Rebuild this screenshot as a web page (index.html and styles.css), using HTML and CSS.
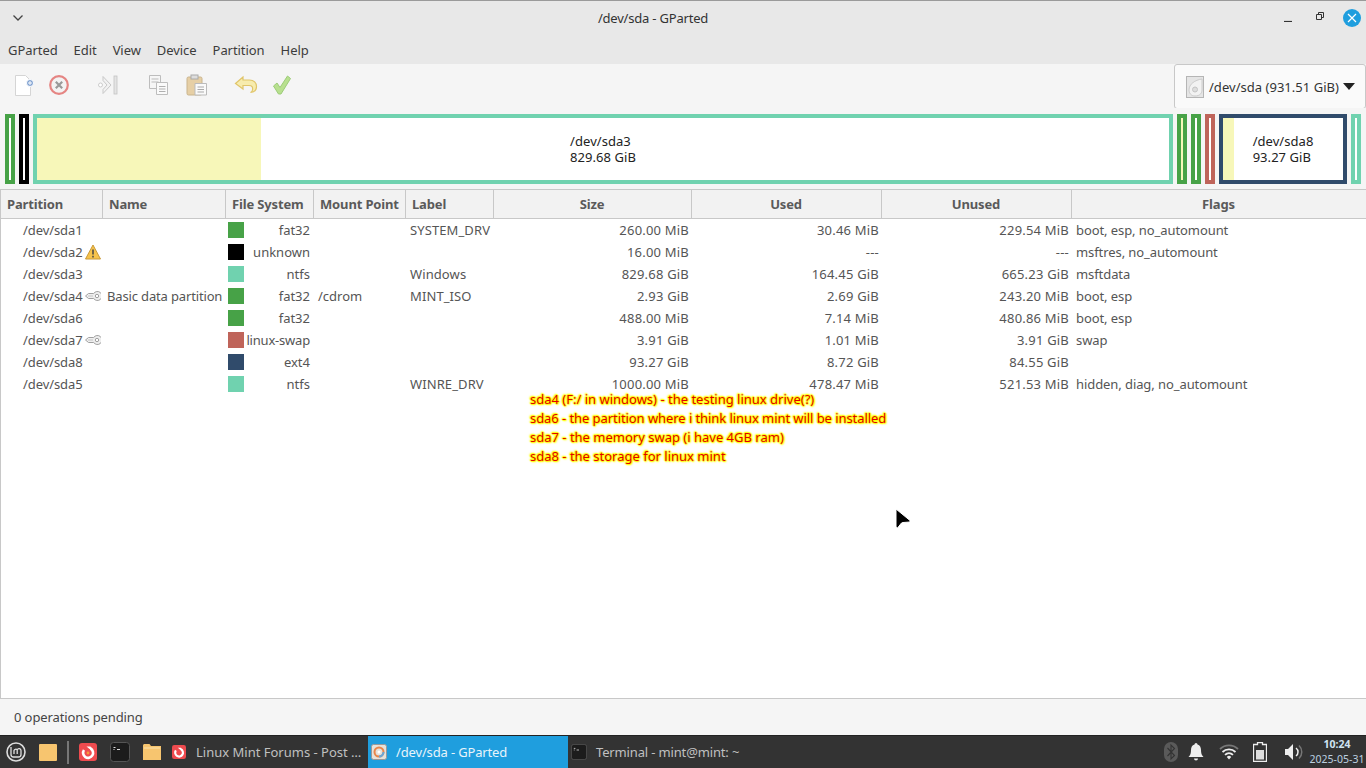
FILE: index.html
```html
<!DOCTYPE html>
<html lang="en">
<head>
<meta charset="utf-8">
<title>/dev/sda - GParted</title>
<link rel="stylesheet" href="styles.css">
</head>
<body>
<div class="window">
  <header class="titlebar">
    <svg class="win-menu" width="12" height="8" viewBox="0 0 12 8"><path d="M1.500 1.500 6 6l4.500-4.500" fill="none" stroke="#444" stroke-width="1.300"/></svg>
    <div class="title">/dev/sda - GParted</div>
    <div class="win-buttons">
      <svg class="b-min" width="8" height="8" viewBox="0 0 8 8"><path d="M0 7.500h8" stroke="#333" stroke-width="1.200"/></svg>
      <svg class="b-max" width="8" height="8" viewBox="0 0 8 8"><path d="M.5 2.500h5v5h-5zM2.500 2V.5h5v5H6" fill="none" stroke="#333" stroke-width="1"/></svg>
      <svg class="b-close" width="18" height="18" viewBox="0 0 18 18"><circle cx="9" cy="9" r="9" fill="#1f9ede"/><path d="M5 5l8 8M13 5l-8 8" stroke="#fff" stroke-width="1.200"/></svg>
    </div>
  </header>
  <nav class="menubar">
    <span>GParted</span><span>Edit</span><span>View</span><span>Device</span><span>Partition</span><span>Help</span>
  </nav>
  <div class="toolbar">
    <div class="tools">
      <svg class="t1" width="22" height="24" viewBox="0 0 22 24"><path d="M2.500 2.500h10l5 5v15h-15z" fill="#fff" stroke="#d5d5d5"/><circle cx="17" cy="10" r="3.500" fill="#7d9fd0" stroke="#fff"/><path d="M15 10h4M17 8v4" stroke="#fff"/></svg>
      <svg class="t2" width="22" height="22" viewBox="0 0 22 22"><circle cx="11" cy="11" r="8.800" fill="#f3f3f3" stroke="#e58583" stroke-width="2.200"/><path d="M7.800 7.800l6.400 6.400M14.200 7.800l-6.400 6.400" stroke="#999" stroke-width="2.200"/></svg>
      <svg class="t3" width="22" height="22" viewBox="0 0 22 22"><circle cx="3.500" cy="11" r="2" fill="#fff" stroke="#ccc"/><path d="M6 2.500 14 11l-8 8.500v-4l4-4.500-4-4.500z" fill="#f2f2f2" stroke="#c8c8c8"/><rect x="17" y="2" width="3" height="18" fill="#e4e4e4" stroke="#c4c4c4" stroke-width=".8"/></svg>
      <svg class="t4" width="22" height="22" viewBox="0 0 22 22"><path d="M1.500 1.500h11v13h-11z" fill="#f6f6f6" stroke="#bdbdbd"/><path d="M3.500 5h7M3.500 8h7" stroke="#bbb"/><path d="M8.500 8.500h11v12h-11z" fill="#fafafa" stroke="#bdbdbd"/><path d="M11 12.500h6.500M11 15h6.500M11 17.500h6.500" stroke="#b0b0b0"/></svg>
      <svg class="t5" width="22" height="22" viewBox="0 0 22 22"><rect x="1" y="3" width="15" height="18" rx="1.500" fill="#e6cfa5" stroke="#c9b48d"/><rect x="5" y="1" width="7" height="4" fill="#ddd" stroke="#aaa"/><path d="M9 9.500h11.500v11.500H9z" fill="#fafafa" stroke="#bbb"/><path d="M11.500 13h6.500M11.500 15.500h6.500M11.500 18h6.500" stroke="#aaa"/></svg>
      <svg class="t6" width="24" height="20" viewBox="0 0 24 20"><path d="M9 2 1.500 8.500 9 14v-3.500h6c3 0 4 1.500 3.500 4.500-.2 1.300-1 2-2 2.500 3.500-.3 6-2.500 6-6s-2.500-6.500-7-6.500H9z" fill="#f7ecae" stroke="#e0c56a" stroke-width="1.200"/></svg>
      <svg class="t7" width="20" height="20" viewBox="0 0 20 20"><path d="M1.500 11 5 8l3 4.500L15.500 1l3 2.500-9.500 15.500h-2.500z" fill="#b8e08f" stroke="#9ccc78"/></svg>
    </div>
    <div class="device-combo">
      <svg width="18" height="22" viewBox="0 0 18 22"><rect x=".5" y=".5" width="17" height="21" fill="#e5e5e5" stroke="#b5b5b5"/><path d="M16 3C9 4 3 8 3 14c0 3 2 6 6 6 5 0 7-3 7-6z" fill="#f2f2f2" stroke="#ccc"/><circle cx="9" cy="13.500" r="2.500" fill="#ddd" stroke="#c4c4c4"/></svg>
      <span>/dev/sda (931.51 GiB)</span>
      <i class="caret"></i>
    </div>
  </div>
  <section class="diskmap">
    <div class="seg fat w10"></div>
    <div class="seg black w10"></div>
    <div class="seg ntfs big">
      <b class="fill sda3fill"></b>
      <div class="seg-label">/dev/sda3<br>829.68 GiB</div>
    </div>
    <div class="seg fat w10"><b class="fill tiny2"></b></div>
    <div class="seg fat w10"></div>
    <div class="seg swap w10"></div>
    <div class="seg ext w128">
      <b class="fill sda8fill"></b>
      <div class="seg-label">/dev/sda8<br>93.27 GiB</div>
    </div>
    <div class="seg ntfs w10"></div>
  </section>
  <main class="list">
    <div class="row head">
      <div>Partition</div><div>Name</div><div>File System</div><div>Mount Point</div><div>Label</div>
      <div class="c">Size</div><div class="c">Used</div><div class="c">Unused</div><div class="c">Flags</div>
    </div>
    <div class="row"><div class="pt">/dev/sda1</div><div></div><div class="fs"><i class="sw g"></i>fat32</div><div></div><div class="lb">SYSTEM_DRV</div><div class="r">260.00 MiB</div><div class="r">30.46 MiB</div><div class="r">229.54 MiB</div><div class="fl">boot, esp, no_automount</div></div>
    <div class="row"><div class="pt">/dev/sda2<svg class="ic" width="16" height="16" viewBox="0 0 16 16"><path d="M8 1 15.500 15H.5z" fill="#f6c34c" stroke="#c99a3a"/><path d="M8 5.500v5M8 11.800v1.700" stroke="#444" stroke-width="1.500"/></svg></div><div></div><div class="fs"><i class="sw k"></i>unknown</div><div></div><div></div><div class="r">16.00 MiB</div><div class="r">---</div><div class="r">---</div><div class="fl">msftres, no_automount</div></div>
    <div class="row"><div class="pt">/dev/sda3</div><div></div><div class="fs"><i class="sw t"></i>ntfs</div><div></div><div class="lb">Windows</div><div class="r">829.68 GiB</div><div class="r">164.45 GiB</div><div class="r">665.23 GiB</div><div class="fl">msftdata</div></div>
    <div class="row"><div class="pt">/dev/sda4<svg class="ic" width="16" height="12" viewBox="0 0 16 12"><path d="M.5 6l3-2.500h5.200a4.500 4.500 0 1 1 0 5H3.500z" fill="#efefef" stroke="#a0a0a0"/><path d="M3 6h5" stroke="#c4c4c4"/><circle cx="12" cy="6" r="1.700" fill="#fff" stroke="#a0a0a0"/></svg></div><div class="nm">Basic data partition</div><div class="fs"><i class="sw g"></i>fat32</div><div>/cdrom</div><div class="lb">MINT_ISO</div><div class="r">2.93 GiB</div><div class="r">2.69 GiB</div><div class="r">243.20 MiB</div><div class="fl">boot, esp</div></div>
    <div class="row"><div class="pt">/dev/sda6</div><div></div><div class="fs"><i class="sw g"></i>fat32</div><div></div><div></div><div class="r">488.00 MiB</div><div class="r">7.14 MiB</div><div class="r">480.86 MiB</div><div class="fl">boot, esp</div></div>
    <div class="row"><div class="pt">/dev/sda7<svg class="ic" width="16" height="12" viewBox="0 0 16 12"><path d="M.5 6l3-2.500h5.200a4.500 4.500 0 1 1 0 5H3.500z" fill="#efefef" stroke="#a0a0a0"/><path d="M3 6h5" stroke="#c4c4c4"/><circle cx="12" cy="6" r="1.700" fill="#fff" stroke="#a0a0a0"/></svg></div><div></div><div class="fs tight"><i class="sw s"></i>linux-swap</div><div></div><div></div><div class="r">3.91 GiB</div><div class="r">1.01 MiB</div><div class="r">3.91 GiB</div><div class="fl">swap</div></div>
    <div class="row"><div class="pt">/dev/sda8</div><div></div><div class="fs"><i class="sw n"></i>ext4</div><div></div><div></div><div class="r">93.27 GiB</div><div class="r">8.72 GiB</div><div class="r">84.55 GiB</div><div class="fl"></div></div>
    <div class="row"><div class="pt">/dev/sda5</div><div></div><div class="fs"><i class="sw t"></i>ntfs</div><div></div><div class="lb">WINRE_DRV</div><div class="r">1000.00 MiB</div><div class="r">478.47 MiB</div><div class="r">521.53 MiB</div><div class="fl">hidden, diag, no_automount</div></div>
    <div class="note">
      <p>sda4 (F:/ in windows) - the testing linux drive(?)</p>
      <p class="narrow">sda6 - the partition where i think linux mint will be installed</p>
      <p>sda7 - the memory swap (i have 4GB ram)</p>
      <p>sda8 - the storage for linux mint</p>
    </div>
    <svg class="cursor" width="17" height="22" viewBox="0 0 17 22"><path d="M2 1v18l1.500 1 4-5 1.500-.5 7-.5v-1.500z" fill="#000" stroke="#fff" stroke-width="1" stroke-linejoin="round"/></svg>
  </main>
  <footer class="status">0 operations pending</footer>
</div>
<div class="taskbar">
  <div class="launchers">
    <svg class="l-mint" width="20" height="20" viewBox="0 0 20 20"><circle cx="10" cy="10" r="9" fill="none" stroke="#ddd" stroke-width="1.600"/><path d="M5 5v7.500A2.500 2.500 0 0 0 7.500 15h5a2.500 2.500 0 0 0 2.500-2.500V8.500a2 2 0 0 0-3.800-.8M11.200 7.700A2 2 0 0 0 8 8.500V12M11.200 7.700V12" fill="none" stroke="#ddd" stroke-width="1.300"/></svg>
    <svg class="l-folder" width="18" height="17" viewBox="0 0 18 17"><rect width="18" height="17" rx="1" fill="#f7c56f"/></svg>
    <i class="sep"></i>
    <svg class="l-ff" width="18" height="18" viewBox="0 0 18 18"><rect width="18" height="18" rx="3" fill="#ee4b4f"/><path d="M11.500 5.500A5 5 0 1 1 5 7" fill="none" stroke="#fff" stroke-width="2.600"/><path d="M7.500 3.500h4l2 3.500-3-1z" fill="#fff"/><circle cx="9" cy="10" r="1.400" fill="#f79a3b"/></svg>
    <svg class="l-term" width="20" height="20" viewBox="0 0 20 20"><rect x=".5" y=".5" width="19" height="19" rx="3" fill="#1c1c1c" stroke="#555"/><path d="M3.500 5.500h2M3.500 7.500h1M7 7.500h3" stroke="#ddd"/></svg>
    <svg class="l-files" width="18" height="16" viewBox="0 0 18 16"><path d="M0 1.500C0 .7.700 0 1.500 0h5L8 2h10v14H0z" fill="#f7c56f"/><path d="M1 4h16" stroke="#fbe3b0"/></svg>
  </div>
  <div class="tasks">
    <div class="task forum"><svg width="14" height="14" viewBox="0 0 18 18"><rect width="18" height="18" rx="3" fill="#ee4b4f"/><path d="M11.500 5.500A5 5 0 1 1 5 7" fill="none" stroke="#fff" stroke-width="2.800"/><path d="M7.500 3.500h4l2 3.500-3-1z" fill="#fff"/></svg><span>Linux Mint Forums - Post …</span></div>
    <div class="task active"><svg width="16" height="16" viewBox="0 0 16 16"><rect x=".5" y=".5" width="15" height="15" rx="2" fill="#e6e2da" stroke="#999"/><circle cx="8" cy="8" r="4.500" fill="none" stroke="#e8864a" stroke-width="2"/><path d="M8 12.500A4.500 4.500 0 0 0 12.500 8" fill="none" stroke="#6aa7d8" stroke-width="2"/><circle cx="8" cy="8" r="1.500" fill="#fff"/></svg><span>/dev/sda - GParted</span></div>
    <div class="task term"><svg width="16" height="16" viewBox="0 0 20 20"><rect x=".5" y=".5" width="19" height="19" rx="3" fill="#1c1c1c" stroke="#555"/><path d="M3.500 5.500h2M3.500 7.500h1M7 7.500h3" stroke="#ddd"/></svg><span>Terminal - mint@mint: ~</span></div>
  </div>
  <div class="tray">
    <svg class="y1" width="14" height="20" viewBox="0 0 14 20"><rect width="14" height="20" rx="7" fill="#5a5a5a"/><path d="M3.500 6l7 7.500L7 17V3l3.500 3.500-7 7.500" fill="none" stroke="#333" stroke-width="1.100"/></svg>
    <svg class="y2" width="16" height="18" viewBox="0 0 16 18"><path d="M8 0a1.500 1.500 0 0 1 1.500 1.500C12 2.300 13 4.500 13 7c0 3 .5 5 2.500 7H.5C2.500 12 3 10 3 7c0-2.500 1-4.700 3.500-5.500A1.500 1.500 0 0 1 8 0zM6 15.500h4a2 2 0 0 1-4 0z" fill="#eee"/></svg>
    <svg class="y3" width="20" height="16" viewBox="0 0 20 16"><path d="M1 5a13 13 0 0 1 18 0" fill="none" stroke="#777" stroke-width="1.800"/><path d="M3.500 8a9.500 9.500 0 0 1 13 0M6 10.800a6 6 0 0 1 8 0" fill="none" stroke="#eee" stroke-width="1.800"/><path d="M7.800 13a3 3 0 0 1 4.400 0L10 15.500z" fill="#eee"/></svg>
    <svg class="y4" width="14" height="20" viewBox="0 0 14 20"><path d="M4.500 .5h5v2h4v17H.5v-17h4z" fill="none" stroke="#eee" stroke-width="1.300"/><rect x="3" y="8" width="8" height="9.500" fill="#ddd"/></svg>
    <svg class="y5" width="20" height="18" viewBox="0 0 20 18"><path d="M1 6h3l5-5v16l-5-5H1z" fill="#eee"/><path d="M12 5a5 5 0 0 1 0 8" fill="none" stroke="#eee" stroke-width="1.500"/><path d="M15 2.500a9 9 0 0 1 0 13" fill="none" stroke="#777" stroke-width="1.500"/></svg>
    <div class="clock"><b>10:24</b><span>2025-05-31</span></div>
  </div>
</div>
</body>
</html>
```
FILE: styles.css
```css
* { box-sizing: border-box; }
html, body { margin: 0; padding: 0; }
body {
  width: 1366px; height: 768px; overflow: hidden;
  font-family: "Noto Sans", "Open Sans", sans-serif;
  font-size: 13px; color: #3c3c3c; background: #fff;
}
.window { height: 735px; display: flex; flex-direction: column; }
.titlebar {
  height: 36px; flex: none; position: relative; background: #e8e8e8;
  border-top: 1px solid #9a9a9a; display: flex; align-items: center;
  justify-content: space-between; padding: 0 5px 2px 12px;
}
.title { position: absolute; left: 0; right: 60px; text-align: center; top: 8px; font-size: 13px; color: #333; letter-spacing: -.2px; }
.win-buttons { display: flex; align-items: center; z-index: 1; }
.b-max { margin-left: 24px; margin-top: -4px; }
.b-min { margin-top: 1px; }
.b-close { margin-left: 19px; }
.menubar { height: 28px; flex: none; background: #e8e8e8; display: flex; align-items: center; gap: 16px; padding: 0 8px 1px; letter-spacing: -.06px; }
.toolbar { height: 44px; flex: none; background: #f5f5f5; display: flex; justify-content: space-between; }
.tools { display: flex; align-items: center; padding: 0 0 2px 13px; }
.t2 { margin-left: 13px; }
.t3 { margin-left: 27px; }
.t4 { margin-left: 29px; }
.t5 { margin-left: 16px; }
.t6 { margin-left: 26px; }
.t7 { margin-left: 14px; }
.device-combo {
  width: 192px; height: 45px; background: #fafafa; border: 1px solid #c8c8c8;
  border-radius: 3px; display: flex; align-items: center; padding: 0 0 0 11px; gap: 5px; color: #333; letter-spacing: .03px;
}
.caret { width: 0; height: 0; border: 6px solid transparent; border-top: 7px solid #222; border-bottom: 0; margin-left: -1px; }
.diskmap { height: 81px; flex: none; background: #f5f5f5; display: flex; gap: 4px; padding: 6px 5px 5px; }
.seg { position: relative; border: 4px solid; background: #fff; height: 70px; display: flex; align-items: center; justify-content: center; color: #222; }
.fill { position: absolute; left: 0; top: 0; bottom: 0; background: #f7f7b9; }
.seg-label { position: relative; text-align: left; line-height: 16px; letter-spacing: .05px; }
.w10 { width: 10px; }
.big { width: 1140px; }
.w128 { width: 128px; }
.fat { border-color: #47a247; }
.black { border-color: #000; }
.ntfs { border-color: #70d2af; }
.swap { border-color: #bf645a; }
.ext { border-color: #304b6b; }
.tiny2 { width: 2px; }
.sda3fill { width: 224px; }
.sda8fill { width: 11px; }
.list { flex: 1; position: relative; border: 1px solid #c8c8c8; border-width: 1px 0 1px 1px; background: #fff; min-height: 0; }
.row {
  display: grid; grid-template-columns: 102px 123px 88px 92px 88px 198px 190px 190px 294px;
  height: 22px; align-items: center; color: #555; white-space: nowrap;
}
.row > div { padding: 0 3px 0 4px; min-width: 0; display: flex; align-items: center; }
.head {
  height: 29px; background: #f2f2f2; border-bottom: 1px solid #c8c8c8; font-weight: 700; color: #5a5a5a;
  align-items: stretch; letter-spacing: -.15px;
}
.row.head > div { border-right: 1px solid #c8c8c8; padding: 0 3px 1px 6px; }
.row.head > div:last-child { border-right: 0; }
.row.head .c { justify-content: center; padding: 0 4px 1px 3px; }
.row > .pt { padding-left: 22px; letter-spacing: -.08px; }
.row > .nm { letter-spacing: -.15px; }
.row > .lb { letter-spacing: .1px; }
.ic { margin-left: 2px; flex: none; }
.row > .fs { justify-content: flex-end; position: relative; padding-right: 4px; }
.row > .tight { letter-spacing: -.2px; }
.sw { position: absolute; left: 2px; top: 1px; width: 16px; height: 16px; }
.g { background: #47a247; }
.k { background: #000; }
.t { background: #70d2af; }
.s { background: #bf645a; }
.n { background: #304b6b; }
.row > .r { justify-content: flex-end; letter-spacing: .2px; }
.row > .fl { letter-spacing: -.08px; }
.note { position: absolute; left: 529px; top: 200px; font-size: 13px; color: #e00000; text-shadow: 1px 0 1px #ff0, -1px 0 1px #ff0, 0 1px 1px #ff0, 0 -1px 1px #ff0, 1px 1px 2px #ff0, -1px -1px 2px #ff0; }
.note p { margin: 0; height: 19px; line-height: 19px; }
.note .narrow { letter-spacing: -.07px; }
.cursor { position: absolute; left: 893px; top: 318px; }
.status { height: 36px; flex: none; background: #f5f5f5; display: flex; align-items: center; padding: 0 14px; color: #444; letter-spacing: -.1px; }
.taskbar { height: 33px; background: #333; border-top: 1px solid #222; display: flex; align-items: center; color: #bbb; position: relative; }
.launchers { display: flex; align-items: center; flex: none; padding-left: 6px; width: 172px; }
.l-folder { margin-left: 13px; }
.sep { width: 2px; height: 23px; background: #777; margin-left: 10px; }
.l-ff { margin-left: 10px; }
.l-term { margin-left: 13px; }
.l-files { margin-left: 13px; }
.tasks { display: flex; flex: none; height: 32px; }
.task { display: flex; align-items: center; height: 32px; color: #c0c0c0; }
.forum { width: 196px; gap: 10px; }
.active { width: 200px; background: #1f9ede; padding-left: 3px; gap: 9px; color: #e8f4fb; letter-spacing: -.15px; }
.term { padding-left: 3px; gap: 9px; letter-spacing: -.15px; }
.tray { margin-left: auto; display: flex; align-items: center; height: 32px; }
.y1 { margin-right: 10px; }
.y2 { margin-right: 15px; }
.y3 { margin-right: 14px; }
.y4 { margin-right: 17px; }
.y5 { margin-right: 6px; }
.clock { width: 54px; display: flex; flex-direction: column; align-items: center; font-size: 10.500px; line-height: 15px; color: #bcd0e0; white-space: nowrap; margin-right: 2px; }
.clock b { font-weight: 700; color: #cfe3f2; }
```
